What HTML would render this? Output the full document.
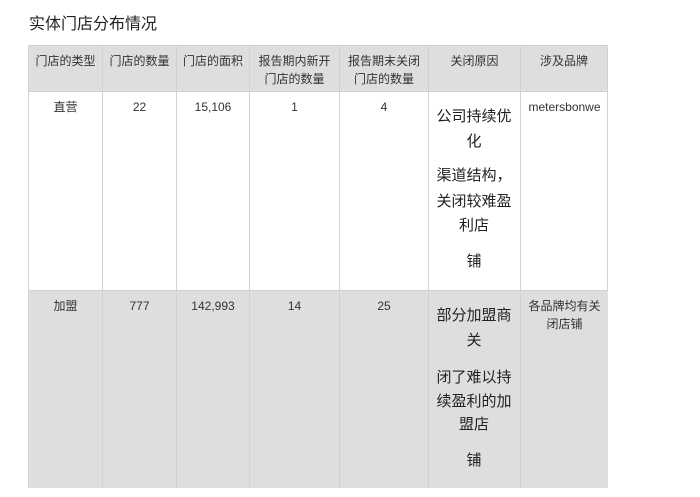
<!DOCTYPE html>
<html><head><meta charset="utf-8"><style>
body{margin:0;width:700px;height:497px;background:#fff;font-family:"Liberation Sans","Noto Sans CJK SC",sans-serif;color:#333;position:relative;overflow:hidden}
.t{position:absolute;left:29px;top:10px;font-size:16px;color:#222}
.c{position:absolute;box-sizing:border-box;border-left:1px solid #d2d2d2;border-top:1px solid #d2d2d2;font-size:12px;text-align:center;line-height:18px;padding-top:6px}
.g{background:#dedede}
.l{position:absolute;font-size:15px;width:92px;text-align:center;color:#222;line-height:20px}
</style></head><body>
<div class="t">实体门店分布情况</div>
<div style="position:absolute;left:28px;top:45px;width:580px;height:443px;border-right:1px solid #d2d2d2;border-bottom:1px solid #d2d2d2;box-sizing:border-box"></div>
<!-- header -->
<div class="c g" style="left:28px;top:45px;width:74px;height:46px">门店的类型</div>
<div class="c g" style="left:102px;top:45px;width:74px;height:46px">门店的数量</div>
<div class="c g" style="left:176px;top:45px;width:73px;height:46px">门店的面积</div>
<div class="c g" style="left:249px;top:45px;width:90px;height:46px">报告期内新开<br>门店的数量</div>
<div class="c g" style="left:339px;top:45px;width:89px;height:46px">报告期末关闭<br>门店的数量</div>
<div class="c g" style="left:428px;top:45px;width:92px;height:46px">关闭原因</div>
<div class="c g" style="left:520px;top:45px;width:88px;height:46px;border-right:1px solid #d2d2d2">涉及品牌</div>
<!-- row1 -->
<div class="c" style="left:28px;top:91px;width:74px;height:199px">直营</div>
<div class="c" style="left:102px;top:91px;width:74px;height:199px">22</div>
<div class="c" style="left:176px;top:91px;width:73px;height:199px">15,106</div>
<div class="c" style="left:249px;top:91px;width:90px;height:199px">1</div>
<div class="c" style="left:339px;top:91px;width:89px;height:199px">4</div>
<div class="c" style="left:428px;top:91px;width:92px;height:199px"></div>
<div class="c" style="left:520px;top:91px;width:88px;height:199px">metersbonwe</div>
<!-- row2 -->
<div class="c g" style="left:28px;top:290px;width:74px;height:198px">加盟</div>
<div class="c g" style="left:102px;top:290px;width:74px;height:198px">777</div>
<div class="c g" style="left:176px;top:290px;width:73px;height:198px">142,993</div>
<div class="c g" style="left:249px;top:290px;width:90px;height:198px">14</div>
<div class="c g" style="left:339px;top:290px;width:89px;height:198px">25</div>
<div class="c g" style="left:428px;top:290px;width:92px;height:198px"></div>
<div class="c g" style="left:520px;top:290px;width:88px;height:198px">各品牌均有关<br>闭店铺</div>
<!-- reasons -->
<div class="l" style="left:428px;top:107px">公司持续优</div>
<div class="l" style="left:428px;top:132px">化</div>
<div class="l" style="left:428px;top:166px">渠道结构，</div>
<div class="l" style="left:428px;top:192px">关闭较难盈</div>
<div class="l" style="left:428px;top:216px">利店</div>
<div class="l" style="left:428px;top:252px">铺</div>
<div class="l" style="left:428px;top:306px">部分加盟商</div>
<div class="l" style="left:428px;top:331px">关</div>
<div class="l" style="left:428px;top:368px">闭了难以持</div>
<div class="l" style="left:428px;top:392px">续盈利的加</div>
<div class="l" style="left:428px;top:415px">盟店</div>
<div class="l" style="left:428px;top:451px">铺</div>
</body></html>
